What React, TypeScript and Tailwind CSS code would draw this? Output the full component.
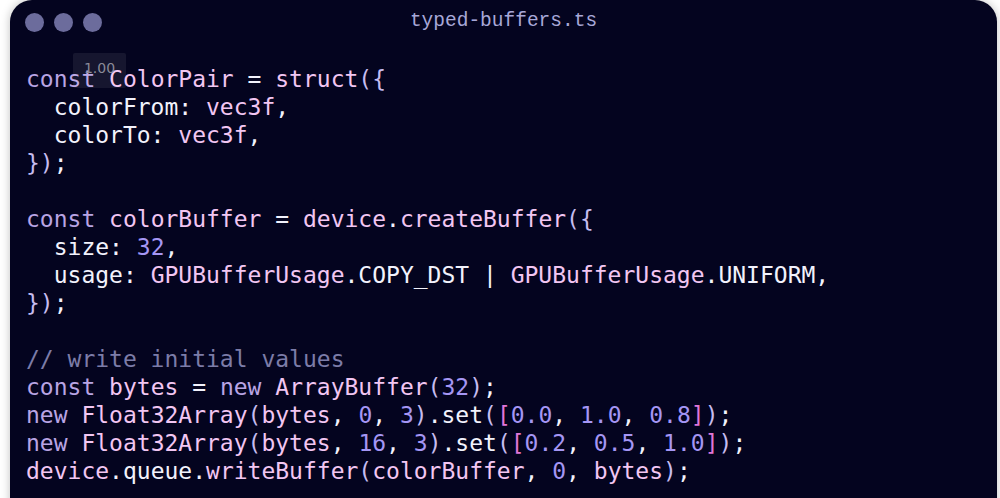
import React from "react";

type Tok = [string, string];

const K = "text-[#b9a4e4]"; // keyword
const I = "text-[#f2c6f2]"; // identifier
const W = "text-[#f2f2fc]"; // plain
const N = "text-[#a596f4]"; // number
const P = "text-[#c6bcf0]"; // punctuation
const B = "text-[#e076d8]"; // bracket
const C = "text-[#7c7ca8]"; // comment

const lines: Tok[][] = [
  [[K, "const "], [I, "ColorPair"], [W, " = "], [I, "struct"], [P, "({"]],
  [[W, "  colorFrom: "], [I, "vec3f"], [W, ","]],
  [[W, "  colorTo: "], [I, "vec3f"], [W, ","]],
  [[P, "})"], [W, ";"]],
  [],
  [[K, "const "], [I, "colorBuffer"], [W, " = "], [I, "device"], [W, "."], [I, "createBuffer"], [P, "({"]],
  [[W, "  size: "], [N, "32"], [W, ","]],
  [[W, "  usage: "], [I, "GPUBufferUsage"], [W, ".COPY_DST | "], [I, "GPUBufferUsage"], [W, ".UNIFORM,"]],
  [[P, "})"], [W, ";"]],
  [],
  [[C, "// write initial values"]],
  [[K, "const "], [I, "bytes"], [W, " = "], [K, "new "], [I, "ArrayBuffer"], [P, "("], [N, "32"], [P, ")"], [W, ";"]],
  [[K, "new "], [I, "Float32Array"], [P, "("], [I, "bytes"], [W, ", "], [N, "0"], [W, ", "], [N, "3"], [P, ")"], [W, ".set"], [P, "("], [B, "["], [N, "0.0"], [W, ", "], [N, "1.0"], [W, ", "], [N, "0.8"], [B, "]"], [P, ")"], [W, ";"]],
  [[K, "new "], [I, "Float32Array"], [P, "("], [I, "bytes"], [W, ", "], [N, "16"], [W, ", "], [N, "3"], [P, ")"], [W, ".set"], [P, "("], [B, "["], [N, "0.2"], [W, ", "], [N, "0.5"], [W, ", "], [N, "1.0"], [B, "]"], [P, ")"], [W, ";"]],
  [[I, "device"], [W, ".queue."], [I, "writeBuffer"], [P, "("], [I, "colorBuffer"], [W, ", "], [N, "0"], [W, ", "], [I, "bytes"], [P, ")"], [W, ";"]],
];

export default function App() {
  return (
    <div className="w-[1000px] h-[498px] bg-white overflow-hidden pl-[10px] pr-[3px]">
      <div className="relative h-[530px] rounded-t-[22px] bg-[#04041f] shadow-[0_0_10px_rgba(0,0,0,0.25)]">
        <div className="grid grid-cols-[1fr_auto_1fr] items-center h-[44px] px-[15px]">
          <div className="flex gap-[10px]">
            <div className="w-[19px] h-[19px] rounded-full bg-[#6c6c9c]" />
            <div className="w-[19px] h-[19px] rounded-full bg-[#6c6c9c]" />
            <div className="w-[19px] h-[19px] rounded-full bg-[#6c6c9c]" />
          </div>
          <div className="text-[19.5px] text-[#a8a8d8] [font-family:'Liberation_Mono',monospace] leading-none">
            typed-buffers.ts
          </div>
          <div />
        </div>
        <div className="mt-[21px] pl-[16px] [font-family:'DejaVu_Sans_Mono',monospace] text-[23px] leading-[28px]">
          {lines.map((l, i) => (
            <div key={i} className="h-[28px] whitespace-pre">
              {l.map((t, j) => (
                <span key={j} className={t[0]}>
                  {t[1]}
                </span>
              ))}
            </div>
          ))}
        </div>
        <div className="absolute left-[63px] top-[53px] w-[53px] h-[35px] bg-white/[0.07] rounded-[2px] flex justify-center pt-[8px]">
          <span className="text-[14px] leading-none text-[#8a8a98] [font-family:'DejaVu_Sans',sans-serif]">1.00</span>
        </div>
      </div>
    </div>
  );
}
